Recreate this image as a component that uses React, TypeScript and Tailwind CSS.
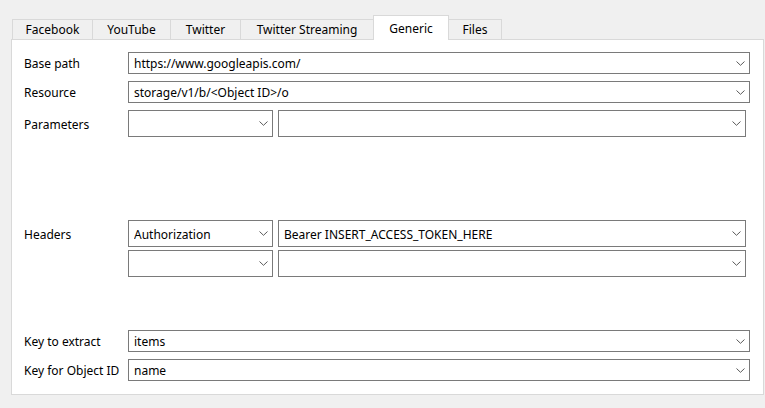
import React from "react";

const tabs = [
  { label: "Facebook", w: "w-[81px]" },
  { label: "YouTube", w: "w-[78px]" },
  { label: "Twitter", w: "w-[70px]" },
  { label: "Twitter Streaming", w: "w-[132px]" },
  { label: "Generic", w: "w-[76px]", active: true },
  { label: "Files", w: "w-[53px]" },
];

function Chevron() {
  return (
    <svg width="9" height="5" viewBox="0 0 9 5" className="shrink-0">
      <path d="M0.5 0.5 L4.5 4.3 L8.5 0.5" fill="none" stroke="#5a5a5a" strokeWidth="1" />
    </svg>
  );
}

function Combo({ value, className = "" }: { value?: string; className?: string }) {
  return (
    <div
      className={`flex items-center bg-white border border-[#7a7a7a] pl-[5px] pr-[4px] ${className}`}
    >
      <span className="flex-1 truncate text-[12px] text-black pt-[2px]">{value}</span>
      <Chevron />
    </div>
  );
}

function Label({ children }: { children: React.ReactNode }) {
  return <div className="w-[104px] shrink-0 text-[12px] text-black pt-[2px]">{children}</div>;
}

export default function App() {
  return (
    <div
      className="w-[765px] h-[408px] bg-[#f0f0f0] pt-[15px] pl-[11px]"
      style={{ fontFamily: '"Noto Sans", "Open Sans", sans-serif' }}
    >
      {/* Tab bar */}
      <div className="flex items-end pl-[1px] h-[25px] relative z-10">
        {tabs.map((t, i) =>
          t.active ? (
            <div
              key={t.label}
              className={`${t.w} h-[25px] bg-white border border-b-0 border-[#d9d9d9] flex items-start justify-center pt-[4px] text-[12px] text-black`}
            >
              {t.label}
            </div>
          ) : (
            <div
              key={t.label}
              className={`${t.w} h-[21px] bg-[#f0f0f0] border border-[#d9d9d9] ${i > 0 ? "border-l-0" : ""} ${tabs[i + 1]?.active ? "border-r-0" : ""} flex items-center justify-center pt-[1px] text-[12px] text-black`}
            >
              {t.label}
            </div>
          )
        )}
      </div>

      {/* Pane */}
      <div className="w-[753px] h-[356px] -mt-px bg-white border border-[#d9d9d9] pt-[12px] pl-[12px] pr-[13px] flex flex-col">
        <div className="flex items-center h-[22px]">
          <Label>Base path</Label>
          <Combo value="https://www.googleapis.com/" className="flex-1 h-[22px]" />
        </div>
        <div className="flex items-center h-[22px] mt-[7px]">
          <Label>Resource</Label>
          <Combo value="storage/v1/b/<Object ID>/o" className="flex-1 h-[22px]" />
        </div>

        {/* Parameters */}
        <div className="flex mt-[7px] h-[103px]">
          <div className="h-[27px] flex items-center">
            <Label>Parameters</Label>
          </div>
          <div className="flex-1 pr-[4px] flex flex-col gap-[3px]">
            <div className="flex gap-[5px]">
              <Combo className="w-[145px] h-[27px]" />
              <Combo className="flex-1 h-[27px]" />
            </div>
          </div>
        </div>

        {/* Headers */}
        <div className="flex mt-[7px] h-[103px]">
          <div className="h-[27px] flex items-center">
            <Label>Headers</Label>
          </div>
          <div className="flex-1 pr-[4px] flex flex-col gap-[3px]">
            <div className="flex gap-[5px]">
              <Combo value="Authorization" className="w-[145px] h-[27px]" />
              <Combo value="Bearer INSERT_ACCESS_TOKEN_HERE" className="flex-1 h-[27px]" />
            </div>
            <div className="flex gap-[5px]">
              <Combo className="w-[145px] h-[27px]" />
              <Combo className="flex-1 h-[27px]" />
            </div>
          </div>
        </div>

        <div className="flex items-center h-[22px] mt-[7px]">
          <Label>Key to extract</Label>
          <Combo value="items" className="flex-1 h-[22px]" />
        </div>
        <div className="flex items-center h-[22px] mt-[7px]">
          <Label>Key for Object ID</Label>
          <Combo value="name" className="flex-1 h-[22px]" />
        </div>
      </div>
    </div>
  );
}
